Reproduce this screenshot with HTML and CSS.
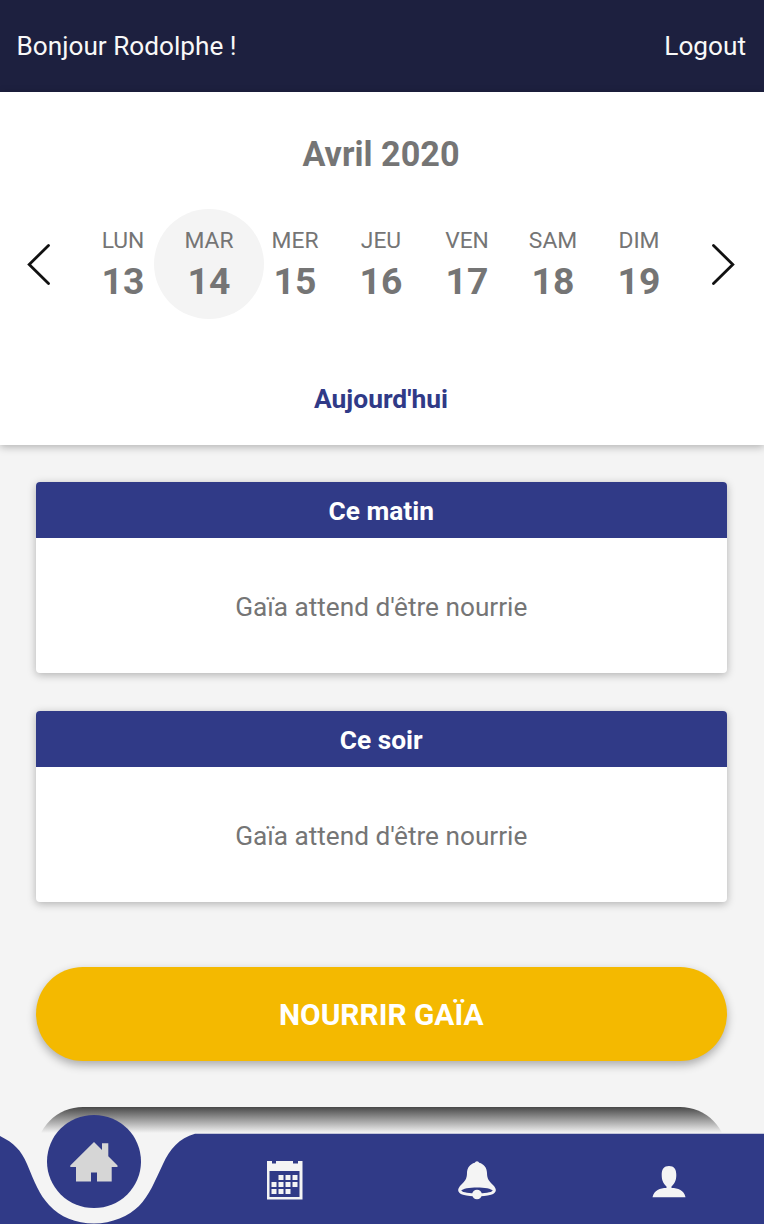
FILE: index.html
```html
<!DOCTYPE html>
<html lang="fr">
<head>
<meta charset="utf-8">
<title>Gaïa</title>
<link rel="stylesheet" href="styles.css">
</head>
<body>
<div class="app">
  <header class="topbar"><span class="hello">Bonjour Rodolphe !</span><span class="logout">Logout</span></header>
  <section class="calendar">
    <h1 class="month">Avril 2020</h1>
    <div class="week">
      <svg class="arrow" width="24" height="42" viewBox="0 0 24 42"><path d="M21.5 2.5 2.2 21.5 21.5 40.5"/></svg>
      <div class="days">
        <div class="day"><span class="name">LUN</span><span class="num">13</span></div>
        <div class="day active"><span class="name">MAR</span><span class="num">14</span></div>
        <div class="day"><span class="name">MER</span><span class="num">15</span></div>
        <div class="day"><span class="name">JEU</span><span class="num">16</span></div>
        <div class="day"><span class="name">VEN</span><span class="num">17</span></div>
        <div class="day"><span class="name">SAM</span><span class="num">18</span></div>
        <div class="day"><span class="name">DIM</span><span class="num">19</span></div>
      </div>
      <svg class="arrow" width="24" height="42" viewBox="0 0 24 42"><path d="M1.5 2.5 20.8 21.5 1.5 40.5"/></svg>
    </div>
    <div class="today">Aujourd'hui</div>
  </section>
  <main class="content">
    <article class="card"><h2 class="card-title">Ce matin</h2><p class="card-text">Gaïa attend d'être nourrie</p></article>
    <article class="card"><h2 class="card-title">Ce soir</h2><p class="card-text">Gaïa attend d'être nourrie</p></article>
    <button class="feed">NOURRIR GAÏA</button>
    <div class="next"></div>
  </main>
  <nav class="tabbar">
    <svg class="wave" width="764" height="91" viewBox="0 1133 764 91"><path d="M0 1136C14 1143 21 1150 27 1164C35 1183 39 1194 49 1205C60 1217 76 1223.5 94 1223.5C112 1223.5 129 1216 139 1206C149 1196 155 1181 163 1164C170 1149 179 1138 195 1133.7H764V1224H0Z"/></svg>
    <div class="home"><svg width="48" height="40" viewBox="0 0 48 40"><path d="M24 0 32 8V1.3H38.3V14.3L47.5 23.5V25H41.7V39.5H27V30.5H21V39.5H6V25H.3V23.5Z"/></svg></div>
    <div class="tabs">
      <svg width="36" height="39" viewBox="0 0 36 39"><path fill-rule="evenodd" d="M0 0H5V2.5H9V0H26V2.5H31V0H35.5V38.5H0ZM2.5 10V36H32.5V10Z"/><path d="M11.500 14h5v5h-5zM18.500 14h5v5h-5zM25.500 14h5v5h-5zM4.500 21h5v5h-5zM11.500 21h5v5h-5zM18.500 21h5v5h-5zM25.500 21h5v5h-5zM4.500 28h5v5h-5zM11.500 28h5v5h-5zM18.500 28h5v5h-5z"/></svg>
      <svg width="38" height="39" viewBox="0 0 38 39"><path fill-rule="evenodd" d="M16.8 1.8A2.3 2.3 0 0 1 21.2 1.8C26 3 29 7 29 12C29 18 31 20 36 25C39 29 38.5 32 33 33.8C24 36 14 36 5 33.8C-.5 32-1 29 2 25C7 20 9 18 9 12C9 7 12 3 16.8 1.8ZM3.3 29.8C6 33.3 32 33.3 34.7 29.8C33 25.3 5 25.3 3.3 29.8Z"/><circle cx="19" cy="33.5" r="4.8"/></svg>
      <svg class="user" width="34" height="32" viewBox="0 0 34 32"><path d="M17 0C22 0 24.3 3 24.3 9C24.3 14 23 17 19.5 20.5V22C26 22 32 24 33.5 31.3H.5C2 24 8 22 14.5 22V20.5C11 17 9.7 14 9.7 9C9.7 3 12 0 17 0Z"/></svg>
    </div>
  </nav>
</div>
</body>
</html>
```
FILE: styles.css
```css
* { box-sizing: border-box; margin: 0; }
body { background: #f4f4f4; font-family: Roboto, sans-serif; color: #757575; }
.app { position: relative; height: 1224px; overflow: hidden; display: flex; flex-direction: column; }
.topbar { height: 91.5px; flex: none; background: #1d203f; color: #f8f8f8; display: flex; justify-content: space-between; align-items: center; padding: 0 18px 0 16.5px; font-size: 26.2px; }
.calendar { height: 353.5px; flex: none; background: #fff; box-shadow: 0 2px 8px rgba(0,0,0,.28); display: flex; flex-direction: column; align-items: center; padding: 42px 2px 0 0; }
.month { font-size: 34.2px; line-height: 40px; font-weight: 700; }
.week { width: 100%; height: 110px; margin-top: 35px; padding: 0 26.5px; display: flex; align-items: center; justify-content: space-between; }
.arrow { fill: none; stroke: #111; stroke-width: 2.8; stroke-linecap: round; }
.days { width: 602px; display: flex; }
.day { width: 86px; height: 110px; flex: none; display: flex; flex-direction: column; align-items: center; padding-top: 18px; }
.active { width: 110px; margin: 0 -12px; border-radius: 50%; background: #f4f4f4; }
.name { font-size: 22.8px; line-height: 28px; }
.num { font-size: 37.3px; line-height: 44px; margin-top: 4.5px; font-weight: 700; }
.today { margin-top: 64.5px; font-size: 26.4px; line-height: 32px; font-weight: 700; color: #303a87; }
.content { padding: 37px 37px 0 35.5px; display: flex; flex-direction: column; gap: 38px; }
.card { height: 191px; flex: none; background: #fff; border-radius: 4px; overflow: hidden; box-shadow: 0 2px 8px rgba(0,0,0,.28); text-align: center; }
.card-title { height: 56px; background: #303a87; color: #fff; font-size: 26.3px; line-height: 58px; font-weight: 700; }
.card-text { font-size: 26.2px; line-height: 138px; }
.feed { height: 93.5px; flex: none; margin-top: 27px; border: 0; border-radius: 47px; background: #f4b900; color: #fff; font: 700 29.9px/96px Roboto, sans-serif; padding: 0; box-shadow: 0 4px 10px rgba(0,0,0,.3); }
.next { height: 94px; flex: none; margin-top: 8.5px; border-radius: 47px; background: linear-gradient(#484848, #f4f4f4 26px); }
.tabbar { position: absolute; left: 0; bottom: 0; width: 764px; height: 91px; background: #f4f4f4; }
.wave { display: block; fill: #303a87; }
.home { position: absolute; left: 47px; top: -18px; width: 93.5px; height: 93px; border-radius: 50%; background: #303a87; display: flex; align-items: center; justify-content: center; padding-top: 1px; }
.home svg { fill: #d6d6d6; }
.tabs { position: absolute; left: 189px; right: 0; top: 0; bottom: 0; display: grid; grid-template-columns: repeat(3, 192px); align-items: center; justify-items: center; padding-top: 3px; fill: #f4f4f4; }
.user { margin-top: 4px; }
```
